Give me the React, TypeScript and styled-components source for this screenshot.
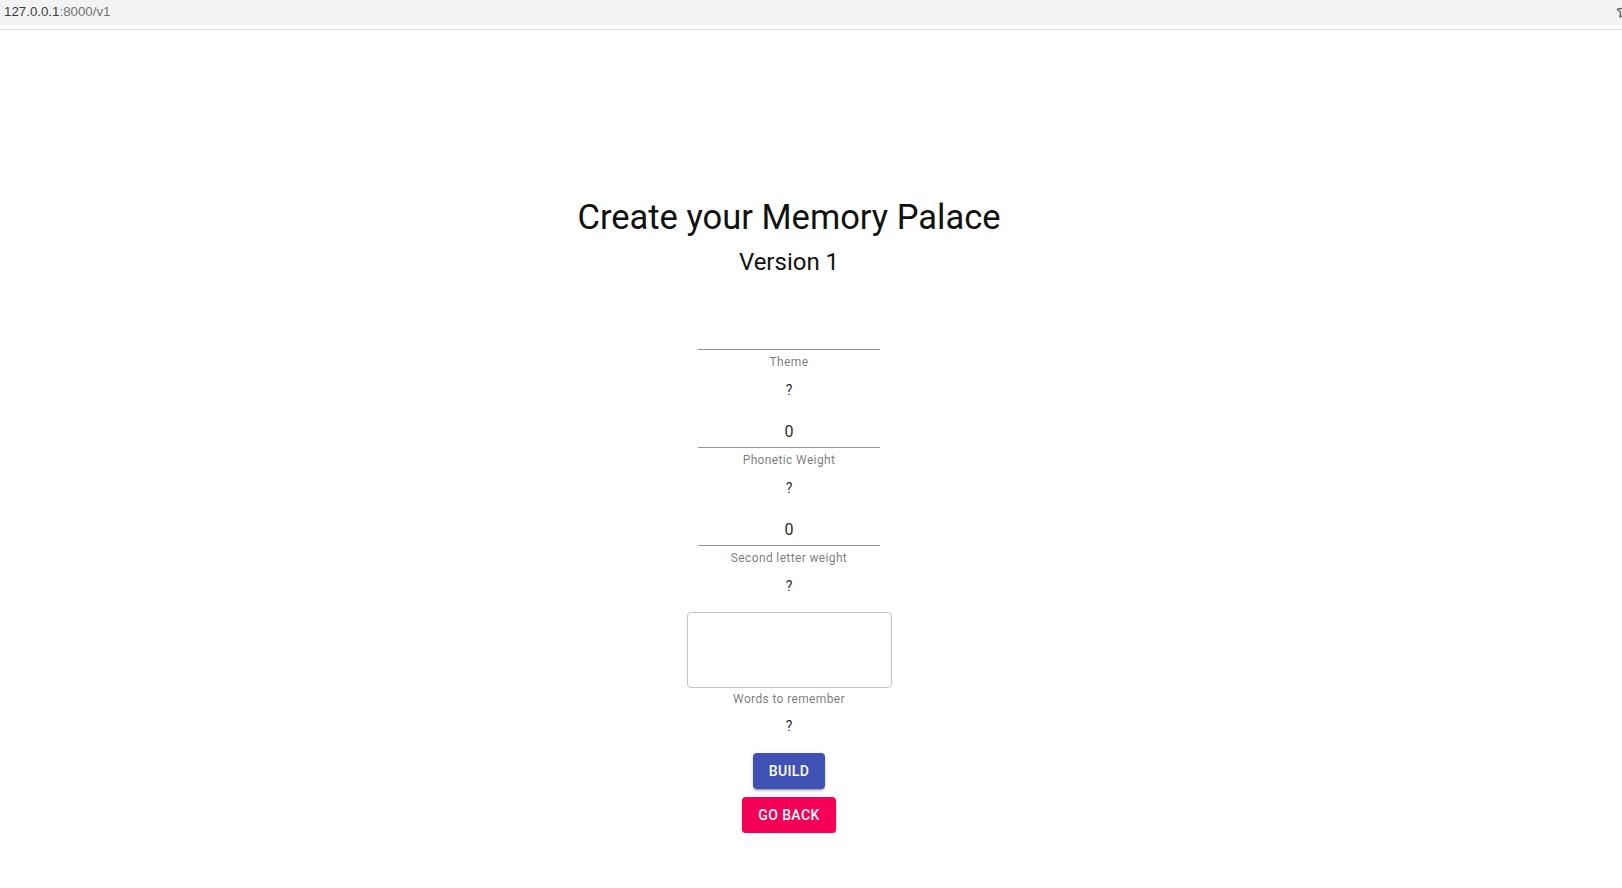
import React from "react";
import styled, { createGlobalStyle } from "styled-components";

const Global = createGlobalStyle`
  html, body { margin: 0; padding: 0; background: #fff; }
  body { font-family: Roboto, "Liberation Sans", Arial, sans-serif; color: rgba(0,0,0,0.87); }
  * { box-sizing: border-box; }
`;

const Chrome = styled.header`
  height: 30px;
  border-bottom: 1px solid #dadce0;
  background: #fff;
`;

const AddressBar = styled.div`
  height: 25px;
  background: #f1f3f4;
  display: flex;
  align-items: center;
  justify-content: space-between;
  padding: 0 0 3px 4px;
  font-family: "Liberation Sans", Arial, sans-serif;
  font-size: 13.3px;
  overflow: hidden;
`;

const Host = styled.span`
  color: #3c4043;
`;

const Path = styled.span`
  color: #70757a;
`;

const StarIcon = styled.svg`
  width: 16px;
  height: 16px;
  margin-right: -10px;
  flex: none;
`;

const Main = styled.main`
  width: calc(100% - 44px);
  display: flex;
  flex-direction: column;
  align-items: center;
  text-align: center;
  padding-top: 166px;
`;

const Title = styled.h1`
  margin: 0;
  font-size: 34.5px;
  line-height: 42px;
  font-weight: 400;
  color: #111;
`;

const Subtitle = styled.h2`
  margin: 8px 0 0;
  font-size: 24px;
  line-height: 32px;
  font-weight: 400;
  color: #111;
`;

const Form = styled.form`
  margin-top: 40px;
  display: flex;
  flex-direction: column;
  align-items: center;
`;

const Field = styled.div<{ $last?: boolean }>`
  display: flex;
  flex-direction: column;
  align-items: center;
  margin-bottom: ${(p) => (p.$last ? "17px" : "16px")};
`;

const LineInput = styled.input`
  width: 182px;
  height: 32px;
  padding: 6px 0 7px;
  border: none;
  border-bottom: 1px solid rgba(0,0,0,0.42);
  outline: none;
  background: transparent;
  text-align: center;
  font-family: Roboto, sans-serif;
  font-size: 16px;
  line-height: 19px;
  color: rgba(0,0,0,0.87);
`;

const Area = styled.textarea`
  width: 205px;
  height: 76px;
  border: 1px solid #c4c4c4;
  border-radius: 4px;
  resize: none;
  outline: none;
  font-family: Roboto, sans-serif;
  font-size: 16px;
  padding: 8px;
`;

const Helper = styled.p<{ $gap: number }>`
  margin: ${(p) => p.$gap}px 0 0;
  font-size: 12px;
  line-height: 14px;
  letter-spacing: 0.03em;
  color: rgba(0,0,0,0.54);
`;

const Hint = styled.p<{ $gap: number }>`
  margin: ${(p) => p.$gap}px 0 0;
  font-size: 14px;
  line-height: 20px;
  color: rgba(0,0,0,0.87);
`;

const Button = styled.button<{ $color: string }>`
  height: 36px;
  padding: 6px 16px;
  border: none;
  border-radius: 4px;
  background: ${(p) => p.$color};
  color: #fff;
  font-family: Roboto, sans-serif;
  font-size: 14px;
  font-weight: 500;
  letter-spacing: 0.02857em;
  text-transform: uppercase;
  box-shadow: 0px 3px 1px -2px rgba(0,0,0,0.2), 0px 2px 2px 0px rgba(0,0,0,0.14), 0px 1px 5px 0px rgba(0,0,0,0.12);
  cursor: pointer;
  & + & { margin-top: 8px; }
`;

const Buttons = styled.div`
  display: flex;
  flex-direction: column;
  align-items: center;
`;

export default function App() {
  return (
    <>
      <Global />
      <Chrome>
        <AddressBar>
          <span>
            <Host>127.0.0.1</Host>
            <Path>:8000/v1</Path>
          </span>
          <StarIcon viewBox="0 0 24 24" fill="none" stroke="#5f6368" strokeWidth="2" strokeLinejoin="round">
            <polygon points="12 2 15.09 8.26 22 9.27 17 14.14 18.18 21.02 12 17.77 5.82 21.02 7 14.14 2 9.27 8.91 8.26 12 2" />
          </StarIcon>
        </AddressBar>
      </Chrome>
      <Main>
        <Title>Create your Memory Palace</Title>
        <Subtitle>Version 1</Subtitle>
        <Form onSubmit={(e) => e.preventDefault()}>
          <Field>
            <LineInput type="text" defaultValue="" />
            <Helper $gap={5}>Theme</Helper>
            <Hint $gap={11}>?</Hint>
          </Field>
          <Field>
            <LineInput type="text" defaultValue="0" />
            <Helper $gap={5}>Phonetic Weight</Helper>
            <Hint $gap={11}>?</Hint>
          </Field>
          <Field>
            <LineInput type="text" defaultValue="0" />
            <Helper $gap={5}>Second letter weight</Helper>
            <Hint $gap={11}>?</Hint>
          </Field>
          <Field $last>
            <Area />
            <Helper $gap={4}>Words to remember</Helper>
            <Hint $gap={10}>?</Hint>
          </Field>
          <Buttons>
            <Button type="button" $color="#3f51b5">Build</Button>
            <Button type="button" $color="#f50057">Go Back</Button>
          </Buttons>
        </Form>
      </Main>
    </>
  );
}
